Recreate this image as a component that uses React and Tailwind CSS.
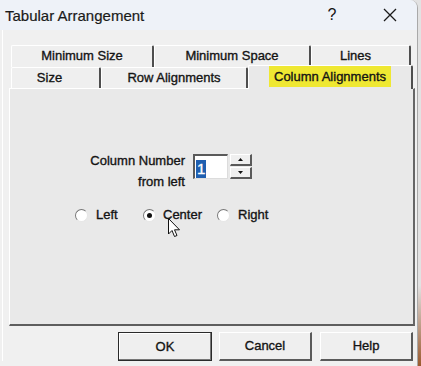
export default function App() {
  const tab1 =
    "h-full flex items-center justify-center text-[13px] bg-[#efefef] border-t border-l border-white border-r-2 border-r-[#4e4e4e] rounded-t-[2px]";
  const raised =
    "border-t border-l border-t-white border-l-white border-r-2 border-b-2 border-r-[#5a5a5a] border-b-[#5a5a5a] bg-[#efefef]";
  return (
    <div className="w-[421px] h-[366px] overflow-hidden flex bg-[linear-gradient(to_bottom,#e2e2e2_0%,#e2e2e2_78%,#9a5a2e_100%)] font-['Liberation_Sans',Arial,sans-serif] text-[#141414] relative">
      <div className="w-[418px] h-full flex flex-col bg-[#f0f0f0] border-r border-[#a9a9a9] rounded-tr-[8px] overflow-hidden">
        {/* Title bar */}
        <div className="h-[30px] shrink-0 flex items-center bg-[#eef2f8] pl-[5px]">
          <span className="text-[15px] leading-none text-[#1a1a1a] [-webkit-text-stroke:0.2px_#1a1a1a]">Tabular Arrangement</span>
          <span className="flex-1" />
          <span className="w-[20px] text-center text-[16px] leading-none">?</span>
          <span className="w-[38px]" />
          <span className="w-[20px] flex justify-center">
            <svg width="14" height="14" viewBox="0 0 14 14">
              <path d="M1 1 L13 13 M13 1 L1 13" stroke="#1a1a1a" strokeWidth="1.3" fill="none" />
            </svg>
          </span>
          <span className="w-[17px]" />
        </div>

        {/* Body */}
        <div className="flex flex-col pt-[15px] border-l border-white ml-[2px] [-webkit-text-stroke:0.35px_#141414]">
          {/* Tab row 1 */}
          <div className="flex h-[22px] ml-[8px]">
            <div className={`${tab1} w-[143px] pb-[2px]`}>Minimum Size</div>
            <div className={`${tab1} w-[157px] pb-[2px]`}>Minimum Space</div>
            <div className={`${tab1} w-[100px] pb-[2px]`}>
              <span className="mr-[10px]">Lines</span>
            </div>
          </div>
          {/* Tab row 2 */}
          <div className="flex h-[21px] ml-[8px]">
            <div className={`${tab1} w-[90px]`}>
              <span className="mr-[12px]">Size</span>
            </div>
            <div className={`${tab1} w-[147px]`}>Row Alignments</div>
            <div className="relative z-10 -mt-[2px] h-[24px] w-[165px] flex justify-center items-start bg-[#e9e9e9] border-t border-l border-white border-r-2 border-r-[#4e4e4e] rounded-t-[2px]">
              <span className="bg-[#efe832] h-[21px] px-[5px] flex items-center text-[13px]">
                Column Alignments
              </span>
            </div>
          </div>

          {/* Panel */}
          <div className="ml-[6px] w-[406px] h-[238px] bg-[#e9e9e9] border-t border-l border-white border-r-2 border-b-2 border-r-[#666] border-b-[#5e5e5e] flex flex-col">
            <div className="flex items-start mt-[61px] ml-[65px]">
              <div className="w-[110px] text-right text-[13px] leading-[21px]">
                Column Number
                <br />
                from left
              </div>
              <div className="ml-[8px] mt-[4px] w-[35px] h-[25px] bg-white border-t-2 border-l-2 border-t-[#5a5a5a] border-l-[#5a5a5a] border-r border-b border-r-[#dcdcdc] border-b-[#dcdcdc] pl-[1px] pt-[1px]">
                <span className="inline-block bg-[#1f5fb0] text-white text-[15px] leading-[18px] px-[1px] [-webkit-text-stroke:0.35px_#fff]">1</span>
              </div>
              <div className="ml-[2px] mt-[4px] w-[22px] h-[25px] flex flex-col gap-[1px]">
                <div className={`${raised} h-[12px] flex items-center justify-center`}>
                  <svg width="5" height="3" viewBox="0 0 5 3">
                    <path d="M2.5 0 L5 3 L0 3 Z" fill="#111" />
                  </svg>
                </div>
                <div className={`${raised} h-[12px] flex items-center justify-center`}>
                  <svg width="5" height="3" viewBox="0 0 5 3">
                    <path d="M0 0 L5 0 L2.5 3 Z" fill="#111" />
                  </svg>
                </div>
              </div>
            </div>

            {/* Radios */}
            <div className="flex items-center h-[20px] mt-[13px] ml-[65px] text-[13px]">
              <div className="w-[68px] flex items-center gap-[8px]">
                <span className="w-[13px] h-[13px] rounded-full bg-white border border-t-[#777] border-l-[#777] border-r-[#e6e6e6] border-b-[#e6e6e6]" />
                <span>Left</span>
              </div>
              <div className="w-[74px] flex items-center gap-[7px]">
                <span className="w-[13px] h-[13px] rounded-full bg-white border border-t-[#777] border-l-[#777] border-r-[#e6e6e6] border-b-[#e6e6e6] flex items-center justify-center">
                  <span className="w-[5px] h-[5px] rounded-full bg-[#111]" />
                </span>
                <span>Center</span>
              </div>
              <div className="flex items-center gap-[8px]">
                <span className="w-[13px] h-[13px] rounded-full bg-white border border-t-[#777] border-l-[#777] border-r-[#e6e6e6] border-b-[#e6e6e6]" />
                <span>Right</span>
              </div>
            </div>
          </div>

          {/* Buttons */}
          <div className="flex mt-[6px] text-[13px]">
            <div className="ml-[115px] w-[94px] h-[29px] flex items-center justify-center bg-[#efefef] border border-[#2a2a2a] shadow-[inset_-1px_-1px_0_#777,inset_1px_1px_0_#fff]">
              OK
            </div>
            <div className={`${raised} ml-[7px] w-[93px] h-[29px] flex items-center justify-center`}>Cancel</div>
            <div className={`${raised} ml-[8px] w-[93px] h-[29px] flex items-center justify-center`}>Help</div>
          </div>
        </div>
      </div>

      {/* Mouse cursor */}
      <svg className="absolute left-[168px] top-[218px]" width="13" height="20" viewBox="0 0 13 20">
        <path
          d="M0.5 0.5 L0.5 16 L4 12.5 L6.5 18.5 L9 17.5 L6.5 11.8 L11.5 11.8 Z"
          fill="#fff"
          stroke="#111"
          strokeWidth="1"
          strokeLinejoin="round"
        />
      </svg>
    </div>
  );
}
